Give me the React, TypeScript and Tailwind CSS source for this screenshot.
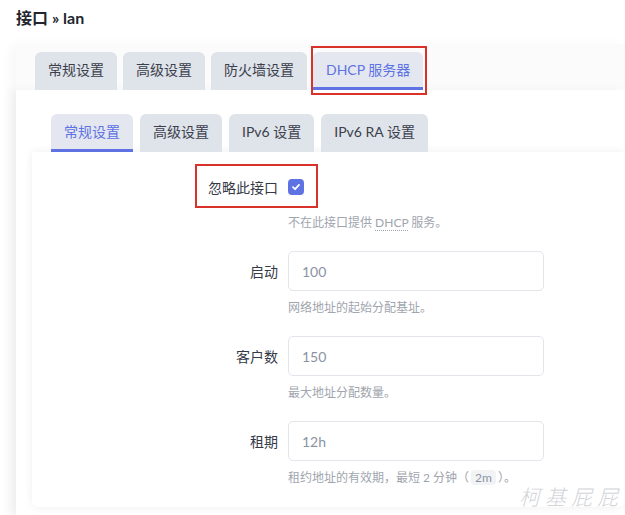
import React from "react";

const font = {
  fontFamily: '"Lato", "Noto Sans CJK SC", "Noto Sans", sans-serif',
};

function Tab({ label, active }: { label: string; active?: boolean }) {
  return (
    <div
      className={`flex h-[38px] items-center rounded-t-[6px] px-[13px] text-[14px] ${
        active
          ? "border-b-[3px] border-[#5e72e4] bg-[#e4e7ef] text-[#5e72e4]"
          : "border-b-[3px] border-transparent bg-[#dfe3ea] text-[#3b3f4c]"
      }`}
    >
      {label}
    </div>
  );
}

function Field({
  label,
  value,
  help,
}: {
  label: string;
  value: string;
  help: React.ReactNode;
}) {
  return (
    <div className="flex">
      <div className="flex h-10 w-[256px] items-center justify-end pr-[10px] text-[14px] text-[#363a47]">
        {label}
      </div>
      <div className="flex flex-col">
        <div className="flex h-10 w-[256px] items-center rounded-[5px] border border-[#e2e5ea] bg-white px-[13px] text-[14px] text-[#8b93a3]">
          {value}
        </div>
        <div className="mt-[7px] h-[19px] text-[12px] leading-[19px] text-[#a0a5ae]">
          {help}
        </div>
      </div>
    </div>
  );
}

export default function App() {
  return (
    <div
      className="relative h-[515px] w-[625px] overflow-hidden bg-white"
      style={font}
    >
      <h2 className="h-[44px] px-4 pt-[6px] text-[16px] font-bold text-[#22252e]">
        接口 » lan
      </h2>

      <div className="ml-4 bg-[#fbfbfc] shadow-[-6px_0_10px_rgba(0,0,0,0.03)]">
        <div className="flex gap-[6px] pl-[19px] pt-2">
          <Tab label="常规设置" />
          <Tab label="高级设置" />
          <Tab label="防火墙设置" />
          <div className="relative">
            <Tab label="DHCP 服务器" active />
            <div className="absolute -bottom-[5px] -left-[2px] -right-[4px] -top-[6px] border-2 border-[#d9322b]" />
          </div>
        </div>

        <div className="bg-white pb-[10px] shadow-[-6px_0_10px_rgba(0,0,0,0.04)]">
          <div className="flex gap-[7px] pl-[35px] pt-[24px]">
            <Tab label="常规设置" active />
            <Tab label="高级设置" />
            <Tab label="IPv6 设置" />
            <Tab label="IPv6 RA 设置" />
          </div>

          <div className="ml-4 flex h-[355px] flex-col rounded-b-[6px] bg-white pt-[15px] shadow-[0_0_10px_rgba(0,0,0,0.07)]">
            <div className="relative flex">
              <div className="flex h-10 w-[256px] items-center justify-end pr-[10px] text-[14px] text-[#363a47]">
                忽略此接口
              </div>
              <div className="flex flex-col">
                <div className="flex h-10 items-center">
                  <div className="flex h-4 w-4 items-center justify-center rounded-[4px] bg-[#5e72e4]">
                    <svg width="10" height="10" viewBox="0 0 10 10">
                      <path
                        d="M2 5.2 L4.1 7.2 L8 2.9"
                        fill="none"
                        stroke="white"
                        strokeWidth="1.8"
                        strokeLinecap="round"
                        strokeLinejoin="round"
                      />
                    </svg>
                  </div>
                </div>
                <div className="mt-[6px] h-[19px] text-[12px] leading-[19px] text-[#a0a5ae]">
                  不在此接口提供{" "}
                  <span className="border-b border-dotted border-[#a0a5ae]">
                    DHCP
                  </span>{" "}
                  服务。
                </div>
              </div>
              <div className="absolute -top-[3px] left-[163px] h-[44px] w-[123px] border-2 border-[#d9322b]" />
            </div>

            <div className="mt-[19px] flex flex-col gap-[19px]">
              <Field label="启动" value="100" help="网络地址的起始分配基址。" />
              <Field label="客户数" value="150" help="最大地址分配数量。" />
              <Field
                label="租期"
                value="12h"
                help={
                  <>
                    租约地址的有效期，最短 2 分钟（
                    <span className="mx-[2px] rounded-[4px] bg-[#f2f3f5] px-1 text-[#8b93a3]">
                      2m
                    </span>
                    ）。
                  </>
                }
              />
            </div>
          </div>
        </div>
      </div>

      <div
        className="absolute bottom-[3px] right-[2px] text-[21px] italic tracking-[5px] text-[#d2d4d8]"
        style={{ fontFamily: '"Noto Sans CJK SC", serif', fontWeight: 200 }}
      >
        柯基屁屁
      </div>
    </div>
  );
}
